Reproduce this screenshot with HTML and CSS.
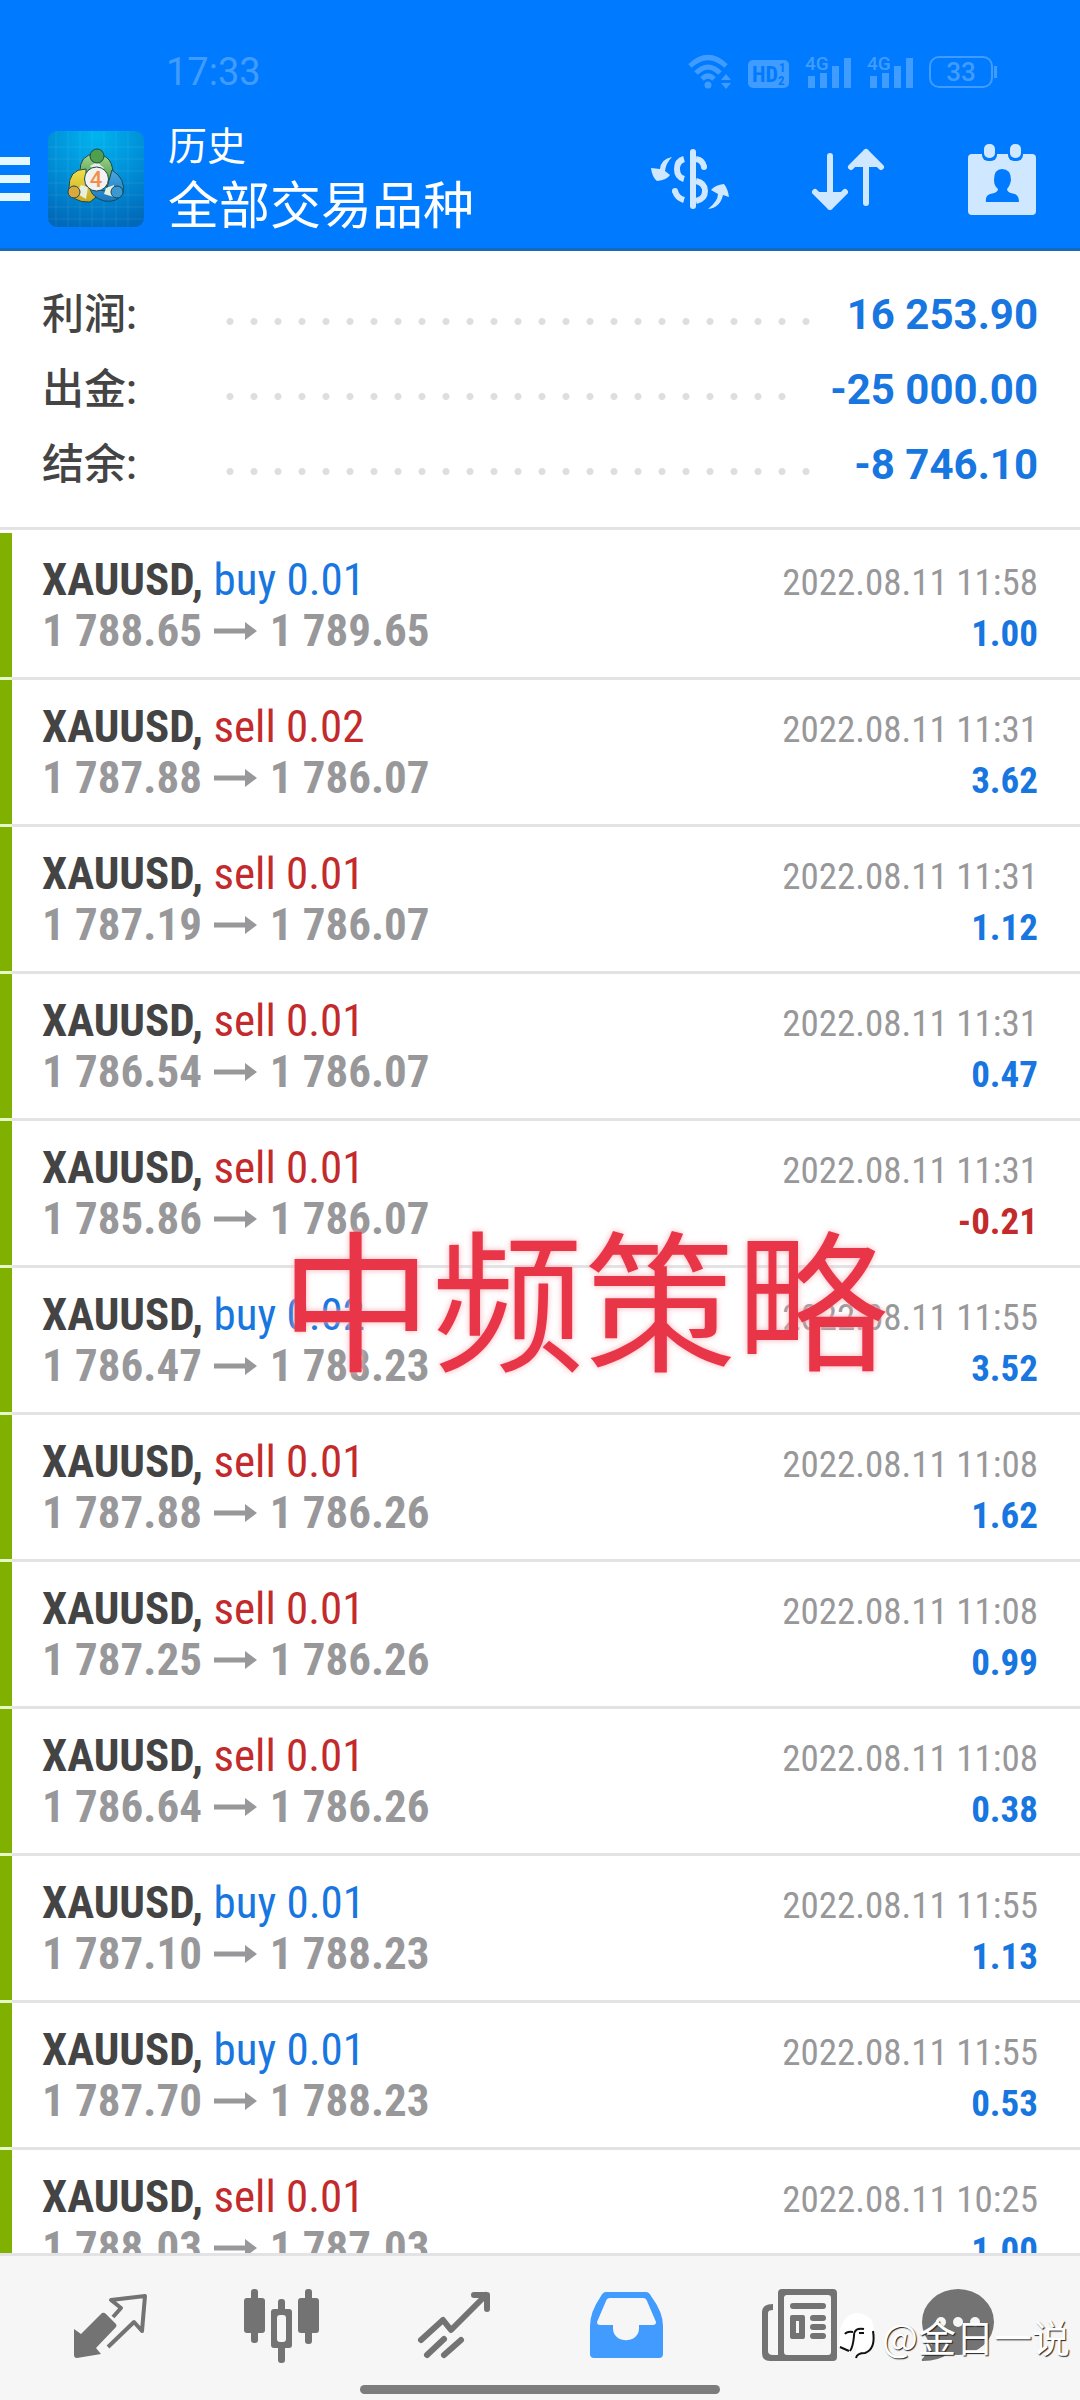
FILE: index.html
```html
<!DOCTYPE html>
<html lang="zh-CN">
<head>
  <meta charset="UTF-8">
  <meta name="viewport" content="width=device-width, initial-scale=1.0">
  <title>历史 | 全部交易品种</title>
  <link rel="stylesheet" href="styles.css">
</head>
<body>

  <svg class="sprite" aria-hidden="true">
    <symbol id="arrow" viewBox="0 0 43 18"><path d="M0 6.500h31V0l12 9-12 9v-6.500H0z"/></symbol>
    <symbol id="signal" viewBox="0 0 46 34">
      <path d="M3 21h7v12H3zM15 18h7v15h-7zM27 11h7v22h-7zM39 3h7v30h-7z"/>
      <text x="0" y="15" font-size="19">4G</text>
    </symbol>
  </svg>

  <header class="header">
    <div class="status">
      <span class="time">17:33</span>
      <div class="status-icons">
        <svg width="44" height="34" viewBox="0 0 44 34">
          <path d="M2 11Q20-6 38 11M8 18Q20 6 32 18M14 24Q20 18 26 24" fill="none" stroke="currentColor" stroke-width="5"/>
          <circle cx="20" cy="30" r="3.500"/><path d="M33 25l5-6 5 6zM33 28l5 6 5-6z"/>
        </svg>
        <svg width="41" height="34" viewBox="0 0 41 34">
          <rect y="5" width="41" height="28" rx="5"/>
          <text class="hd" x="4" y="27" font-size="22">HD</text>
          <text class="hd" x="31" y="17" font-size="13">1</text>
          <text class="hd" x="30" y="30" font-size="13">2</text>
        </svg>
        <svg width="46" height="34"><use href="#signal"/></svg>
        <svg width="46" height="34"><use href="#signal"/></svg>
        <span class="battery">33</span>
      </div>
    </div>

    <div class="toolbar">
      <button class="menu" aria-label="菜单"><span></span><span></span><span></span></button>
      <svg class="logo" width="96" height="96" viewBox="0 0 96 96">
        <defs>
          <radialGradient id="sky" cx="50%" cy="5%" r="100%"><stop offset="0" stop-color="#00b4ee"/><stop offset=".5" stop-color="#0090d8"/><stop offset="1" stop-color="#0068b8"/></radialGradient>
          <linearGradient id="green" x2="0" y2="1"><stop offset="0" stop-color="#a5d68c"/><stop offset="1" stop-color="#2f8a3a"/></linearGradient>
          <linearGradient id="gold" x2="0" y2="1"><stop offset="0" stop-color="#f2e04a"/><stop offset="1" stop-color="#c8a820"/></linearGradient>
          <linearGradient id="blue" x2="0" y2="1"><stop offset="0" stop-color="#4aa8e0"/><stop offset="1" stop-color="#1a78c0"/></linearGradient>
        </defs>
        <rect width="96" height="96" rx="9" fill="url(#sky)"/>
        <path d="M8 0v96M20 0v96M32 0v96M44 0v96M56 0v96M68 0v96M80 0v96M0 16h96M0 28h96M0 40h96M0 52h96M0 64h96M0 76h96M0 88h96" stroke="#fff" stroke-opacity=".08"/>
        <g stroke="#174a50" stroke-width="1">
          <path d="M32 42Q31 23 48 23Q66 24 65 46L60 58L50 38L38 42z" fill="url(#green)"/>
          <path d="M38 38Q20 38 21 58Q24 72 42 71L53 62L38 55z" fill="url(#gold)"/>
          <path d="M64 39Q78 48 75 62Q70 72 56 70Q44 66 42 58L58 60z" fill="url(#blue)"/>
          <path d="M42 35L49 31L56 37L50 44zM33 54L40 56L38 68L28 62zM58 57L66 54L66 66L56 63z" fill="#e8efdc" stroke="none"/>
          <circle cx="49" cy="25" r="7" fill="#4f9f4c"/>
          <circle cx="26" cy="61" r="6" fill="#dba83c"/>
          <circle cx="69" cy="61" r="6" fill="#3c98d2"/>
          <circle cx="48.500" cy="48" r="12" fill="#f3f1f1"/>
        </g>
        <text x="48" y="56" font-size="22" text-anchor="middle" fill="#f09048" font-weight="500">4</text>
      </svg>
      <div class="titles">
        <div class="title">历史</div>
        <div class="subtitle">全部交易品种</div>
      </div>
      <div class="actions">
        <button aria-label="货币">
          <svg width="78" height="60" viewBox="0 0 78 60">
            <path d="M42 3v54M33 10Q26 12 26 20Q26 28 33 30M24 42Q26 49 33 51M45 10Q52 11 53 18M45 32Q54 34 54 42Q54 50 45 52" fill="none" stroke="currentColor" stroke-width="6"/>
            <circle cx="42" cy="3" r="3"/><circle cx="42" cy="57" r="3"/><circle cx="53" cy="18" r="3"/><circle cx="24" cy="42" r="3"/>
            <path d="M21 8Q10 10 9 20L0 19Q1 28 6 32Q16 31 19 26L14 22Q15 14 21 8zM57 60Q69 59 72 46L78 48Q77 40 73 35Q64 36 60 41L67 45Q67 52 57 60z"/>
          </svg>
        </button>
        <button aria-label="排序">
          <svg width="73" height="64" viewBox="0 0 73 64" fill="none" stroke="currentColor" stroke-width="6" stroke-linecap="round" stroke-linejoin="round">
            <path d="M18 9v51M3 45l15 15 15-15M54 56V5M39 20L54 5l15 15"/>
          </svg>
        </button>
        <button aria-label="日期">
          <svg width="68" height="71" viewBox="0 0 68 71">
            <rect y="10" width="68" height="61" rx="4"/>
            <g fill="#007aff"><rect x="14" y="2" width="15" height="15" rx="6"/><rect x="40" y="2" width="15" height="15" rx="6"/>
            <path d="M34 25Q43 25 43 36Q42 42 39 45Q39 49 47 50Q51 52 51 58H18Q17 52 22 50Q30 49 30 45Q26 42 26 36Q26 25 34 25z"/></g>
            <rect x="16" width="11" height="14" rx="5"/><rect x="42" width="11" height="14" rx="5"/>
          </svg>
        </button>
      </div>
    </div>
  </header>

  <section class="summary">
    <div class="total"><span class="label">利润:</span><span class="dots"></span><b>16 253.90</b></div>
    <div class="total"><span class="label">出金:</span><span class="dots"></span><b>-25 000.00</b></div>
    <div class="total"><span class="label">结余:</span><span class="dots"></span><b>-8 746.10</b></div>
  </section>

  <main class="history">
    <ul class="deals">
      <li>
        <div class="line"><span><b>XAUUSD,</b> <span class="buy">buy 0.01</span></span><time>2022.08.11 11:58</time></div>
        <div class="line"><span class="price">1 788.65 <svg><use href="#arrow"/></svg> 1 789.65</span><span class="profit">1.00</span></div>
      </li>
      <li>
        <div class="line"><span><b>XAUUSD,</b> <span class="sell">sell 0.02</span></span><time>2022.08.11 11:31</time></div>
        <div class="line"><span class="price">1 787.88 <svg><use href="#arrow"/></svg> 1 786.07</span><span class="profit">3.62</span></div>
      </li>
      <li>
        <div class="line"><span><b>XAUUSD,</b> <span class="sell">sell 0.01</span></span><time>2022.08.11 11:31</time></div>
        <div class="line"><span class="price">1 787.19 <svg><use href="#arrow"/></svg> 1 786.07</span><span class="profit">1.12</span></div>
      </li>
      <li>
        <div class="line"><span><b>XAUUSD,</b> <span class="sell">sell 0.01</span></span><time>2022.08.11 11:31</time></div>
        <div class="line"><span class="price">1 786.54 <svg><use href="#arrow"/></svg> 1 786.07</span><span class="profit">0.47</span></div>
      </li>
      <li>
        <div class="line"><span><b>XAUUSD,</b> <span class="sell">sell 0.01</span></span><time>2022.08.11 11:31</time></div>
        <div class="line"><span class="price">1 785.86 <svg><use href="#arrow"/></svg> 1 786.07</span><span class="profit loss">-0.21</span></div>
      </li>
      <li>
        <div class="line"><span><b>XAUUSD,</b> <span class="buy">buy 0.02</span></span><time>2022.08.11 11:55</time></div>
        <div class="line"><span class="price">1 786.47 <svg><use href="#arrow"/></svg> 1 788.23</span><span class="profit">3.52</span></div>
      </li>
      <li>
        <div class="line"><span><b>XAUUSD,</b> <span class="sell">sell 0.01</span></span><time>2022.08.11 11:08</time></div>
        <div class="line"><span class="price">1 787.88 <svg><use href="#arrow"/></svg> 1 786.26</span><span class="profit">1.62</span></div>
      </li>
      <li>
        <div class="line"><span><b>XAUUSD,</b> <span class="sell">sell 0.01</span></span><time>2022.08.11 11:08</time></div>
        <div class="line"><span class="price">1 787.25 <svg><use href="#arrow"/></svg> 1 786.26</span><span class="profit">0.99</span></div>
      </li>
      <li>
        <div class="line"><span><b>XAUUSD,</b> <span class="sell">sell 0.01</span></span><time>2022.08.11 11:08</time></div>
        <div class="line"><span class="price">1 786.64 <svg><use href="#arrow"/></svg> 1 786.26</span><span class="profit">0.38</span></div>
      </li>
      <li>
        <div class="line"><span><b>XAUUSD,</b> <span class="buy">buy 0.01</span></span><time>2022.08.11 11:55</time></div>
        <div class="line"><span class="price">1 787.10 <svg><use href="#arrow"/></svg> 1 788.23</span><span class="profit">1.13</span></div>
      </li>
      <li>
        <div class="line"><span><b>XAUUSD,</b> <span class="buy">buy 0.01</span></span><time>2022.08.11 11:55</time></div>
        <div class="line"><span class="price">1 787.70 <svg><use href="#arrow"/></svg> 1 788.23</span><span class="profit">0.53</span></div>
      </li>
      <li>
        <div class="line"><span><b>XAUUSD,</b> <span class="sell">sell 0.01</span></span><time>2022.08.11 10:25</time></div>
        <div class="line"><span class="price">1 788.03 <svg><use href="#arrow"/></svg> 1 787.03</span><span class="profit">1.00</span></div>
      </li>
    </ul>
    <div class="caption">中频策略</div>
  </main>

  <footer class="footer">
    <nav class="tabs">
      <button aria-label="行情">
        <svg viewBox="0 0 80 80"><path d="M4 43l7 5 21-21q2-1 4 1l10 10q1 2 0 3L26 62l5 6-24 4q-3 0-3-3z"/>
        <path d="M43 31l8-9-10-8 34-4-3 35-8-9-26 25" fill="none" stroke="currentColor" stroke-width="4" stroke-linejoin="round"/></svg>
      </button>
      <button aria-label="图表">
        <svg viewBox="0 0 80 80"><rect x="2" y="12" width="21" height="35" rx="3"/><rect x="9" y="3" width="7" height="54" rx="3"/>
        <rect x="36" y="13" width="7" height="64" rx="3"/><rect x="29" y="23" width="21" height="39" rx="3"/><rect x="35" y="29" width="9" height="27" rx="3" fill="#f6f6f6"/>
        <rect x="56" y="12" width="21" height="35" rx="3"/><rect x="63" y="3" width="7" height="55" rx="3"/></svg>
      </button>
      <button aria-label="交易">
        <svg viewBox="0 0 80 80"><path d="M7 54l22-20 8 10L72 9M60 9h13v14M13 69l17-16M30 69l17-15" fill="none" stroke="currentColor" stroke-width="6" stroke-linecap="round" stroke-linejoin="round"/></svg>
      </button>
      <button class="active" aria-label="历史">
        <svg viewBox="0 0 80 80"><path fill-rule="evenodd" d="M20 6h40q3 0 5 4 12 16 12 30v28q0 4-4 4H8q-4 0-4-4V40Q4 26 15 10q2-4 5-4zM24 12q-3 0-4 3l-9 21q0 3 3 3h13v4c1 15 25 15 26 0v-4h14q3 0 3-3l-9-21q-1-3-4-3z"/></svg>
      </button>
      <button aria-label="新闻">
        <svg viewBox="0 0 80 80"><path fill-rule="evenodd" d="M24 3h51q4 0 4 4v64q0 4-4 4H12q-8 0-8-8V26q0-8 11-8v6q-5 0-5 3v38q0 4 5 4h5V7q0-4 4-4zM29 9q-3 0-3 3v54q0 3 3 3h41q3 0 3-3V12q0-3-3-3z"/>
        <rect x="32" y="17" width="36" height="6" rx="3"/><path fill-rule="evenodd" d="M34 29h11q2 0 2 2v20q0 2-2 2H34q-2 0-2-2V31q0-2 2-2zM38 35v12h3V35z"/>
        <rect x="52" y="29" width="16" height="6" rx="3"/><rect x="52" y="38" width="16" height="6" rx="3"/><rect x="52" y="47" width="16" height="6" rx="3"/></svg>
      </button>
      <button aria-label="聊天">
        <svg viewBox="0 0 80 80"><ellipse cx="28" cy="36" rx="36" ry="33"/><path d="M-6 55Q0 66-8 73q-1 2 1 2 16 0 26-8z"/>
        <g fill="#f6f6f6"><circle cx="11" cy="36" r="5"/><circle cx="28" cy="36" r="5"/><circle cx="45" cy="36" r="5"/></g></svg>
      </button>
    </nav>
    <div class="home-bar"></div>
    <div class="watermark">
      <svg width="38" height="46" viewBox="0 0 38 46"><path d="M2 18Q6 0 20 0Q36 2 36 18Q36 34 26 40L17 42 19 33 11 38 1 34z" fill="#fff"/>
      <path d="M26 16q-10-2-10 7-1 11-4 15M7 21q2-3 8-2M21 20h5M35 18q3 18-8 22-8 0-9 5M2 34l9 4" fill="none" stroke="#111" stroke-width="2"/></svg>
      <span>@金日一说</span>
    </div>
  </footer>

</body>
</html>
```

FILE: styles.css
```css
* {
  box-sizing: border-box;
}
body {
  margin: 0;
  height: 100vh;
  display: flex;
  flex-direction: column;
  background: #fff;
  color: #444;
  font-family: Roboto, "Noto Sans CJK SC", sans-serif;
}
button {
  padding: 0;
  border: none;
  background: none;
  color: inherit;
  cursor: pointer;
}
svg {
  display: block;
  fill: currentColor;
  overflow: visible;
}
.sprite {
  position: absolute;
  width: 0;
  height: 0;
}

/* header */
.header {
  background: #007aff;
  border-bottom: 3px solid #1769bd;
  color: #fff;
}
.status {
  display: flex;
  justify-content: space-between;
  align-items: center;
  padding: 54px 83px 0 166px;
  color: #419cff;
}
.time {
  font-size: 38px;
  line-height: 36px;
}
.status-icons {
  display: flex;
  align-items: center;
  gap: 16px;
  font-weight: 500;
}
.hd {
  fill: #007aff;
  font-family: "Roboto Condensed", "Liberation Sans Narrow", sans-serif;
  font-weight: bold;
}
.battery {
  position: relative;
  width: 64px;
  margin-right: 4px;
  border: 2px solid #419cff;
  border-radius: 10px;
  font-size: 26px;
  line-height: 28px;
  text-align: center;
}
.battery::after {
  content: "";
  position: absolute;
  top: 8px;
  right: -6px;
  width: 3px;
  height: 12px;
  background: #419cff;
}
.toolbar {
  display: flex;
  align-items: center;
  padding: 29px 44px 9px 0;
}
.menu {
  display: flex;
  flex-direction: column;
  gap: 10px;
  width: 30px;
}
.menu span {
  height: 8px;
  background: #e6f8ff;
}
.logo {
  margin: 0 24px 0 18px;
}
.titles {
  flex: 1;
}
.title {
  font-size: 39px;
  line-height: 56px;
}
.subtitle {
  font-size: 51px;
  line-height: 64px;
}
.actions {
  display: flex;
  align-items: center;
  gap: 83px;
  color: #cfe8ff;
}

/* totals */
.summary {
  padding: 26px 42px 25px;
  border-bottom: 3px solid #e3e3e5;
  font-size: 42px;
  line-height: 75px;
}
.total {
  display: flex;
}
.label {
  width: 176px;
  font-weight: 500;
}
.dots {
  flex: 1;
  margin-right: 32px;
  background: radial-gradient(circle, #dedede 3px, transparent 4px) 0 7px / 24px 75px repeat-x;
}
.total b {
  color: #1776e0;
}

/* deals */
.history {
  position: relative;
  flex: 1;
  min-height: 0;
  overflow: hidden;
}
.deals {
  display: flex;
  flex-direction: column;
  gap: 3px;
  margin: 3px 0 0;
  padding: 0;
  list-style: none;
  background: linear-gradient(to right, #e6f7c8 12px, #e3e3e5 12px);
}
.deals li {
  padding: 21px 42px 21px 30px;
  border-left: 12px solid #80b000;
  background: #fff;
  font-family: "Roboto Condensed", "Liberation Sans Narrow", sans-serif;
  font-size: 45px;
  line-height: 51px;
}
.line {
  display: flex;
  justify-content: space-between;
  align-items: baseline;
  height: 51px;
}
.buy {
  color: #1776e0;
}
.sell {
  color: #c22a2c;
}
.price {
  color: #98989a;
  font-weight: bold;
}
.price svg {
  display: inline-block;
  width: 43px;
  height: 18px;
  margin: 0 2px;
  vertical-align: 6px;
}
time {
  color: #98989a;
  font-size: 37px;
}
.profit {
  color: #1776e0;
  font-size: 37px;
  font-weight: bold;
}
.loss {
  color: #c22a2c;
}
.caption {
  position: absolute;
  top: 663px;
  left: 280px;
  color: #e83648;
  font-size: 152px;
  font-weight: 400;
  line-height: 230px;
  white-space: nowrap;
  text-shadow: 0 0 6px #f7b0b8;
}

/* bottom bar */
.footer {
  position: relative;
  padding: 30px 70px 6px;
  border-top: 3px solid #e3e3e5;
  background: #f6f6f6;
  color: #737373;
}
.tabs {
  display: flex;
  justify-content: space-between;
}
.tabs svg {
  width: 80px;
  height: 80px;
}
.active {
  color: #429bff;
}
.home-bar {
  width: 360px;
  height: 9px;
  margin: 19px auto 0;
  border-radius: 5px;
  background: #7c7c7c;
}
.watermark {
  position: absolute;
  top: 55px;
  right: 10px;
  display: flex;
  align-items: center;
  gap: 6px;
  color: #fff;
  font-family: "Noto Sans CJK SC", sans-serif;
  font-size: 38px;
  line-height: 50px;
  text-shadow: 1px 1px 1px #222;
}
```
